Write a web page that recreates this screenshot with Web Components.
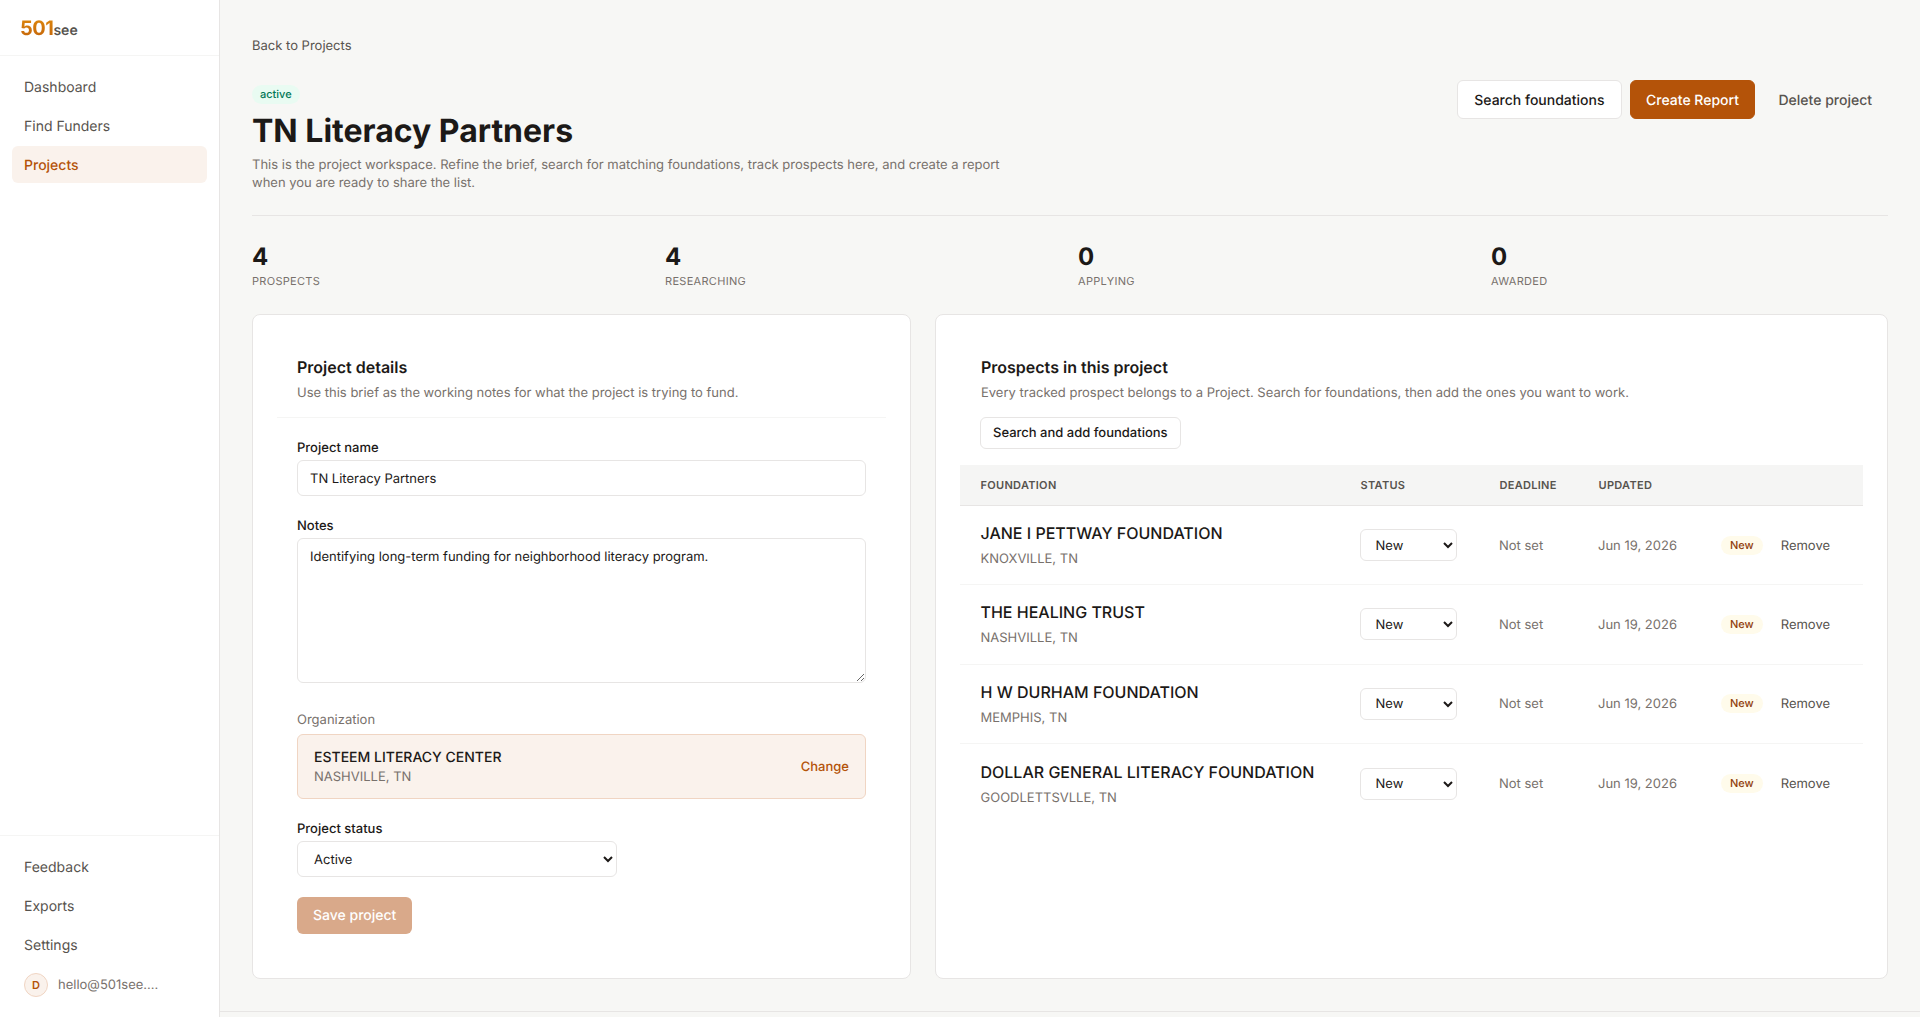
<!DOCTYPE html>
<html lang="en">
<head>
<meta charset="utf-8">
<title>TN Literacy Partners</title>
<style>
  html, body { margin: 0; height: 100%; }
  body {
    font-family: Inter, "Liberation Sans", sans-serif;
    color: #1c1917;
    background: #f7f7f5;
    overflow: hidden;
    text-rendering: geometricPrecision;
  }
</style>
</head>
<body>
<app-shell>
  <side-bar slot="side">
    <nav-link>Dashboard</nav-link>
    <nav-link>Find Funders</nav-link>
    <nav-link active>Projects</nav-link>
    <nav-link slot="bottom">Feedback</nav-link>
    <nav-link slot="bottom">Exports</nav-link>
    <nav-link slot="bottom">Settings</nav-link>
  </side-bar>

  <page-head title="TN Literacy Partners" status="active"
    text="This is the project workspace. Refine the brief, search for matching foundations, track prospects here, and create a report when you are ready to share the list."></page-head>

  <stat-row>
    <stat-item value="4" label="Prospects"></stat-item>
    <stat-item value="4" label="Researching"></stat-item>
    <stat-item value="0" label="Applying"></stat-item>
    <stat-item value="0" label="Awarded"></stat-item>
  </stat-row>

  <work-grid>
    <project-details></project-details>
    <prospect-list>
      <prospect-row name="JANE I PETTWAY FOUNDATION" place="KNOXVILLE, TN"></prospect-row>
      <prospect-row name="THE HEALING TRUST" place="NASHVILLE, TN"></prospect-row>
      <prospect-row name="H W DURHAM FOUNDATION" place="MEMPHIS, TN"></prospect-row>
      <prospect-row name="DOLLAR GENERAL LITERACY FOUNDATION" place="GOODLETTSVLLE, TN" last></prospect-row>
    </prospect-list>
  </work-grid>
</app-shell>

<script>
const controlCss = `
  input, textarea, select {
    display: block;
    box-sizing: border-box;
    font: 400 13px/18px Inter, "Liberation Sans", sans-serif;
    text-rendering: geometricPrecision;
    color: #1c1917;
    background: #fff;
    border: 1px solid #e7e5e4;
    border-radius: 6px;
    outline: none;
    margin: 0;
  }
  button {
    font: 500 13px/18px Inter, "Liberation Sans", sans-serif;
    text-rendering: geometricPrecision;
    border-radius: 6px;
    cursor: pointer;
    margin: 0;
  }
`;

class AppShell extends HTMLElement {
  constructor() {
    super();
    this.attachShadow({mode: 'open'});
    this.shadowRoot.innerHTML = `
      <style>
        :host { display: flex; height: 100vh; overflow: hidden; }
        main { flex: 1; min-width: 0; display: flex; flex-direction: column; }
        .scroll { flex: 1; min-height: 0; padding: 36px 32px 0; overflow: hidden; }
        .back { font-size: 13px; line-height: 20px; color: #57534e; margin-bottom: 24px; }
        footer { height: 5px; border-top: 1px solid #e7e5e4; }
      </style>
      <slot name="side"></slot>
      <main>
        <div class="scroll">
          <div class="back">Back to Projects</div>
          <slot></slot>
        </div>
        <footer></footer>
      </main>
    `;
  }
}

class SideBar extends HTMLElement {
  constructor() {
    super();
    this.attachShadow({mode: 'open'});
    this.shadowRoot.innerHTML = `
      <style>
        :host {
          display: flex;
          flex-direction: column;
          box-sizing: border-box;
          width: 220px;
          flex: none;
          height: 100%;
          background: #fff;
          border-right: 1px solid #e7e5e4;
        }
        .logo {
          height: 56px;
          box-sizing: border-box;
          border-bottom: 1px solid #f5f5f4;
          padding: 16px 20px 0;
          font-weight: 700;
          display: flex;
          align-items: baseline;
          line-height: 24px;
        }
        .num {
          font-size: 20px;
          letter-spacing: -0.5px;
          background: linear-gradient(180deg, #e08a0c, #c2620a);
          -webkit-background-clip: text;
          background-clip: text;
          color: transparent;
        }
        .see { font-size: 14px; color: #57534e; font-weight: 600; }
        nav { flex: 1; padding: 12px 12px; display: flex; flex-direction: column; gap: 2px; }
        .bottom {
          border-top: 1px solid #f5f5f4;
          padding: 12px 12px 0;
          height: 182px;
          box-sizing: border-box;
          display: flex;
          flex-direction: column;
          gap: 2px;
        }
        .user {
          display: flex;
          align-items: center;
          gap: 10px;
          padding: 8px 12px;
          font-size: 13px;
          color: #78716c;
        }
        .avatar {
          width: 24px;
          height: 24px;
          box-sizing: border-box;
          border-radius: 50%;
          background: #faf2ec;
          border: 1px solid #f0d5c3;
          color: #b45309;
          font-size: 11px;
          font-weight: 600;
          display: grid;
          place-items: center;
        }
      </style>
      <div class="logo"><span class="num">501</span><span class="see">see</span></div>
      <nav><slot></slot></nav>
      <div class="bottom">
        <slot name="bottom"></slot>
        <div class="user"><span class="avatar">D</span><span>hello@501see....</span></div>
      </div>
    `;
  }
}

class NavLink extends HTMLElement {
  constructor() {
    super();
    this.attachShadow({mode: 'open'});
    this.shadowRoot.innerHTML = `
      <style>
        :host {
          display: block;
          padding: 1px 12px 0;
          box-sizing: border-box;
          height: 37px;
          line-height: 37px;
          font-size: 14px;
          color: #57534e;
          border-radius: 6px;
        }
        :host([active]) { background: #faf2ec; color: #b45309; font-weight: 500; }
      </style>
      <slot></slot>
    `;
  }
}

class PageHead extends HTMLElement {
  constructor() {
    super();
    this.attachShadow({mode: 'open'});
    this.shadowRoot.innerHTML = `
      <style>
        ${controlCss}
        :host {
          display: flex;
          justify-content: space-between;
          align-items: flex-start;
          padding-bottom: 23px;
          border-bottom: 1px solid #e7e5e4;
        }
        .info { padding-top: 5px; max-width: 780px; }
        .badge {
          display: inline-block;
          vertical-align: top;
          height: 19px;
          line-height: 19px;
          padding: 0 8px;
          border-radius: 10px;
          background: #e9fbf2;
          color: #047857;
          font-size: 11px;
          font-weight: 500;
        }
        .badge-row { height: 19px; }
        h1 { margin: 8px 0 6px; font-size: 32px; line-height: 38px; font-weight: 700; }
        p { margin: 0; font-size: 13px; line-height: 18px; color: #78716c; }
        .actions { display: flex; gap: 8px; }
        button { height: 39px; padding: 2px 16px 0; font-size: 14px; }
        .plain { background: #fff; border: 1px solid #e7e5e4; color: #1c1917; }
        .primary { background: #b45309; border: 1px solid #b45309; color: #fff; padding: 2px 15.5px 0; }
        .ghost { background: transparent; border: 0; color: #57534e; padding: 2px 16px 0 15px; }
      </style>
      <div class="info">
        <div class="badge-row"><span class="badge"></span></div>
        <h1></h1>
        <p></p>
      </div>
      <div class="actions">
        <button class="plain">Search foundations</button>
        <button class="primary">Create Report</button>
        <button class="ghost">Delete project</button>
      </div>
    `;
  }

  connectedCallback() {
    this.shadowRoot.querySelector('.badge').textContent = this.getAttribute('status');
    this.shadowRoot.querySelector('h1').textContent = this.getAttribute('title');
    this.shadowRoot.querySelector('p').textContent = this.getAttribute('text');
    this.removeAttribute('title');
  }
}

class StatRow extends HTMLElement {
  constructor() {
    super();
    this.attachShadow({mode: 'open'});
    this.shadowRoot.innerHTML = `
      <style>
        :host {
          display: grid;
          grid-template-columns: repeat(4, 1fr);
          gap: 16px;
          padding: 26px 0 25px;
        }
      </style>
      <slot></slot>
    `;
  }
}

class StatItem extends HTMLElement {
  constructor() {
    super();
    this.attachShadow({mode: 'open'});
    this.shadowRoot.innerHTML = `
      <style>
        :host { display: block; }
        b { display: block; font-size: 24px; line-height: 30px; font-weight: 700; }
        span {
          display: block;
          margin-top: 1px;
          font-size: 11px;
          line-height: 16px;
          letter-spacing: 0.3px;
          text-transform: uppercase;
          color: #78716c;
        }
      </style>
      <b></b><span></span>
    `;
  }

  connectedCallback() {
    this.shadowRoot.querySelector('b').textContent = this.getAttribute('value');
    this.shadowRoot.querySelector('span').textContent = this.getAttribute('label');
  }
}

class WorkGrid extends HTMLElement {
  constructor() {
    super();
    this.attachShadow({mode: 'open'});
    this.shadowRoot.innerHTML = `
      <style>
        :host {
          display: grid;
          grid-template-columns: 659px 1fr;
          gap: 24px;
          height: 665px;
        }
      </style>
      <slot></slot>
    `;
  }
}

const cardCss = `
  :host {
    display: block;
    box-sizing: border-box;
    background: #fff;
    border: 1px solid #e7e5e4;
    border-radius: 8px;
    padding: 24px;
  }
  h2 { margin: 0; font-size: 16px; line-height: 22px; font-weight: 600; }
  .sub { margin: 5px 0 0; font-size: 13px; line-height: 20px; color: #78716c; }
  .head { padding: 17px 20px 0; }
`;

class ProjectDetails extends HTMLElement {
  constructor() {
    super();
    this.attachShadow({mode: 'open'});
    this.shadowRoot.innerHTML = `
      <style>
        ${cardCss}
        ${controlCss}
        .head { height: 79px; box-sizing: border-box; border-bottom: 1px solid #f5f5f4; }
        form { padding: 20px 20px 0; }
        label { display: block; font-size: 13px; line-height: 20px; font-weight: 500; margin-bottom: 2px; margin-top: 0; }
        label.muted { color: #78716c; font-weight: 400; margin-top: 27px; margin-bottom: 4px; }
        input { width: 100%; height: 36px; padding: 1px 12px 0; }
        textarea { width: 100%; height: 145px; padding: 9px 12px 8px; resize: vertical; }
        .gap { margin-top: 20px; }
        .org {
          height: 65px;
          box-sizing: border-box;
          display: flex;
          align-items: center;
          justify-content: space-between;
          padding: 0 16px;
          background: #faf2ec;
          border: 1px solid #f0d5c3;
          border-radius: 6px;
        }
        .org div { margin-top: 1px; }
        .org b { display: block; font-size: 14px; line-height: 18px; font-weight: 500; }
        .org i { display: block; font-style: normal; font-size: 13px; line-height: 18px; color: #78716c; margin-top: 1px; }
        .org a { font-size: 13px; font-weight: 500; color: #b45309; }
        select { width: 320px; height: 36px; padding: 1px 12px 0; }
        .save {
          display: block;
          margin-top: 20px;
          height: 37px;
          padding: 1px 16px 0;
          border: 0;
          color: #fff;
          background: #d9a98a;
          font-size: 14px;
        }
      </style>
      <div class="head">
        <h2>Project details</h2>
        <p class="sub">Use this brief as the working notes for what the project is trying to fund.</p>
      </div>
      <form>
        <label>Project name</label>
        <input value="TN Literacy Partners">
        <label class="gap">Notes</label>
        <textarea>Identifying long-term funding for neighborhood literacy program.</textarea>
        <label class="muted">Organization</label>
        <div class="org">
          <div><b>ESTEEM LITERACY CENTER</b><i>NASHVILLE, TN</i></div>
          <a>Change</a>
        </div>
        <label class="gap">Project status</label>
        <select><option>Active</option></select>
        <button class="save" type="button">Save project</button>
      </form>
    `;
  }
}

const rowCols = 'grid-template-columns: 380px 139px 99px 123px 1fr;';

class ProspectList extends HTMLElement {
  constructor() {
    super();
    this.attachShadow({mode: 'open'});
    this.shadowRoot.innerHTML = `
      <style>
        ${cardCss}
        ${controlCss}
        .head { padding-left: 21px; }
        .add {
          display: block;
          margin: 14px 0 0 -1px;
          height: 32px;
          padding: 0 12px;
          background: #fff;
          border: 1px solid #e7e5e4;
          color: #1c1917;
        }
        .thead {
          display: grid;
          ${rowCols}
          align-items: center;
          height: 41px;
          box-sizing: border-box;
          margin-top: 16px;
          background: #f5f5f4;
          border-bottom: 1px solid #e7e5e4;
          font-size: 11px;
          font-weight: 600;
          letter-spacing: 0.3px;
          text-transform: uppercase;
          color: #57534e;
        }
        .thead span { padding-left: 20.5px; }
      </style>
      <div class="head">
        <h2>Prospects in this project</h2>
        <p class="sub">Every tracked prospect belongs to a Project. Search for foundations, then add the ones you want to work.</p>
        <button class="add" type="button">Search and add foundations</button>
      </div>
      <div class="thead">
        <span>Foundation</span><span>Status</span><span>Deadline</span><span>Updated</span><span></span>
      </div>
      <slot></slot>
    `;
  }
}

class ProspectRow extends HTMLElement {
  constructor() {
    super();
    this.attachShadow({mode: 'open'});
    this.shadowRoot.innerHTML = `
      <style>
        ${controlCss}
        :host {
          display: grid;
          ${rowCols}
          align-items: center;
          height: 79.3px;
          box-sizing: border-box;
          border-bottom: 1px solid #f5f5f4;
          font-size: 13px;
        }
        :host([last]) { border-bottom: 0; }
        .cell { padding-left: 20px; }
        .cell.first { padding-left: 20.5px; }
        .name { font-size: 16px; line-height: 22px; font-weight: 500; }
        .place { font-size: 13px; line-height: 18px; margin-top: 5px; color: #78716c; padding-top: 1px; }
        select { width: 97px; height: 32px; padding: 1px 10.5px 0; }
        .muted { color: #78716c; line-height: 20px; padding-top: 1px; }
        .acts { display: flex; align-items: center; gap: 18px; }
        .pill {
          height: 19px;
          line-height: 19px;
          padding: 0 9px;
          border-radius: 10px;
          background: #fffbeb;
          color: #92400e;
          font-size: 11px;
          font-weight: 500;
        }
        .rm { color: #57534e; padding-top: 1px; }
      </style>
      <div class="cell first"><div class="name"></div><div class="place"></div></div>
      <div class="cell"><select><option>New</option></select></div>
      <div class="cell muted">Not set</div>
      <div class="cell muted">Jun 19, 2026</div>
      <div class="cell acts"><span class="pill">New</span><span class="rm">Remove</span></div>
    `;
  }

  connectedCallback() {
    this.shadowRoot.querySelector('.name').textContent = this.getAttribute('name');
    this.shadowRoot.querySelector('.place').textContent = this.getAttribute('place');
  }
}

customElements.define('app-shell', AppShell);
customElements.define('side-bar', SideBar);
customElements.define('nav-link', NavLink);
customElements.define('page-head', PageHead);
customElements.define('stat-row', StatRow);
customElements.define('stat-item', StatItem);
customElements.define('work-grid', WorkGrid);
customElements.define('project-details', ProjectDetails);
customElements.define('prospect-list', ProspectList);
customElements.define('prospect-row', ProspectRow);
</script>
</body>
</html>
